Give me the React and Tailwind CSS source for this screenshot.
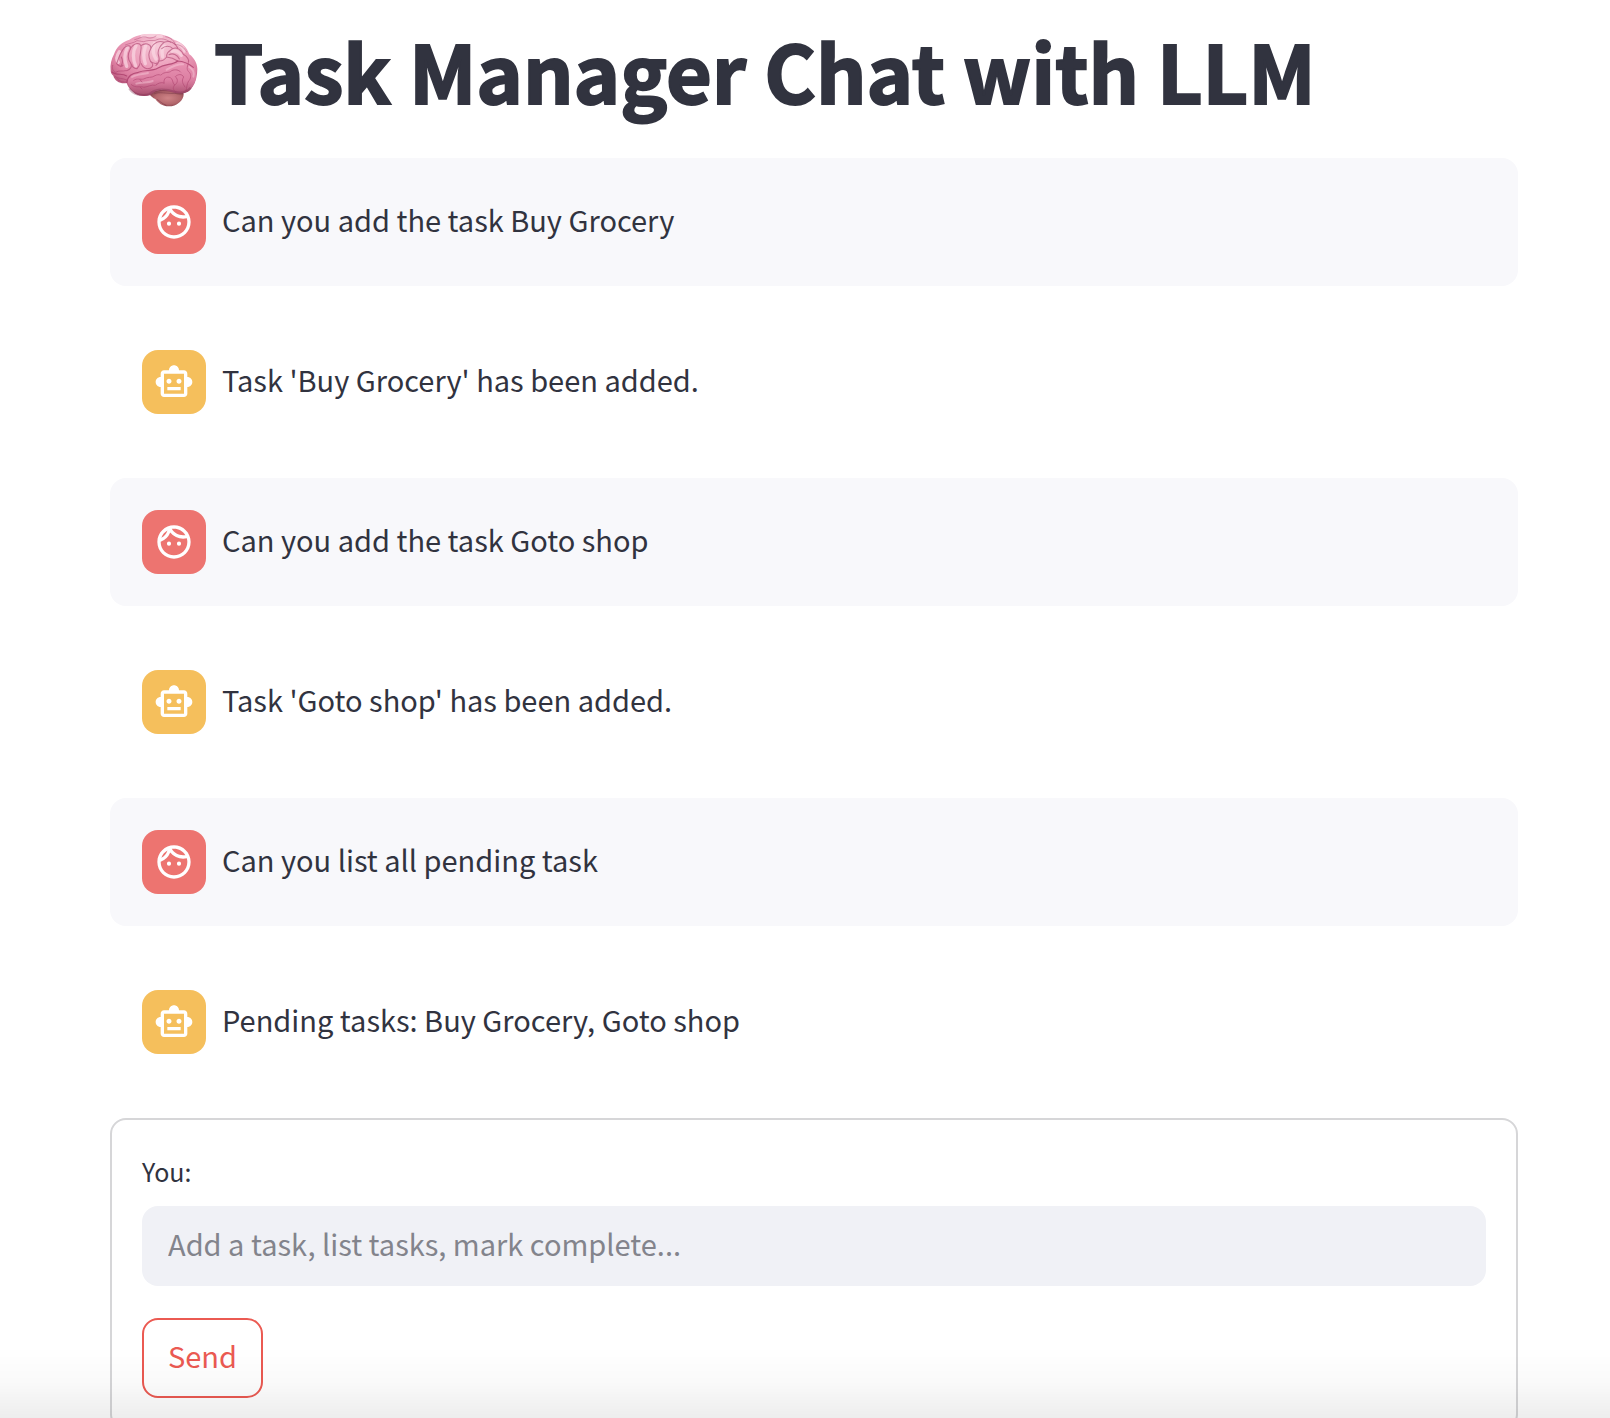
import { MdOutlineFace, MdOutlineSmartToy } from "react-icons/md";

const messages = [
  { role: "user", text: "Can you add the task Buy Grocery" },
  { role: "assistant", text: "Task 'Buy Grocery' has been added." },
  { role: "user", text: "Can you add the task Goto shop" },
  { role: "assistant", text: "Task 'Goto shop' has been added." },
  { role: "user", text: "Can you list all pending task" },
  { role: "assistant", text: "Pending tasks: Buy Grocery, Goto shop" },
];

function Brain() {
  return (
    <svg viewBox="30 40 264 225" className="h-[75px] w-[88px] shrink-0" role="img" aria-label="Brain">
      <defs>
        <radialGradient id="cortex" cx="0.55" cy="0.2" r="0.75">
          <stop offset="0" stopColor="#f6c9d8" />
          <stop offset="0.45" stopColor="#ec9fbb" />
          <stop offset="0.75" stopColor="#dd7fa1" />
          <stop offset="1" stopColor="#b4567a" />
        </radialGradient>
        <linearGradient id="temporal" x1="0" y1="0" x2="0" y2="1">
          <stop offset="0" stopColor="#e994b4" />
          <stop offset="0.55" stopColor="#dc7fa2" />
          <stop offset="1" stopColor="#a54d6c" />
        </linearGradient>
        <radialGradient id="cerebellum" cx="0.55" cy="0.5" r="0.6">
          <stop offset="0" stopColor="#cf8487" />
          <stop offset="0.6" stopColor="#b3676c" />
          <stop offset="1" stopColor="#7d3c47" />
        </radialGradient>
        <filter id="soft">
          <feGaussianBlur stdDeviation="2.2" />
        </filter>
      </defs>
      <path d="M146 218C160 208 240 206 251 222C252 242 230 260 206 260C188 260 174 250 166 238C160 236 150 230 146 218Z" fill="url(#cerebellum)" />
      <path d="M32 152C30 136 34 118 42 104C48 84 66 66 88 60C104 48 130 42 156 43C182 42 206 48 222 60C244 66 262 84 268 104C282 114 292 132 292 148C292 166 288 186 278 200C270 216 256 222 240 221C226 222 212 216 198 212C178 206 164 214 150 226C132 232 108 228 98 214C88 208 82 198 80 190C62 194 44 184 40 168C34 164 32 158 32 152Z" fill="url(#cortex)" />
      <path d="M84 188C84 168 96 160 116 158C134 148 160 152 176 146C196 136 216 130 234 124C252 124 270 132 282 142C294 162 288 192 274 206C262 222 244 222 228 219C208 210 184 208 168 211C152 230 126 232 106 222C92 212 86 204 84 188Z" fill="url(#temporal)" />
      <g fill="none" stroke="#fbd9e4" strokeWidth="10" strokeLinecap="round" opacity="0.7" filter="url(#soft)">
        <path d="M58 96C50 108 48 120 55 128M82 84C74 100 72 120 80 140M108 78C98 94 98 120 107 138M137 78C130 96 130 116 136 132M163 72C157 90 160 106 168 118M193 80C187 84 184 94 188 112M216 94C228 92 238 98 244 107M232 72C242 76 250 85 254 94M126 50C144 46 164 46 184 51" />
        <path d="M96 172C108 164 126 164 144 160M200 150C218 140 232 133 249 134M109 192C124 187 144 190 158 184M268 142C277 148 284 158 280 171" strokeWidth="6" opacity="0.55" />
      </g>
      <g fill="none" stroke="#ab3f6c" strokeLinecap="round" strokeLinejoin="round">
        <g strokeWidth="3.4" opacity="0.8">
          <path d="M36 157C49 168 66 160 80 169M80 189C84 168 95 161 115 158C136 148 154 157 174 145C198 130 216 138 233 124C249 125 264 130 280 143" />
        </g>
        <g strokeWidth="3.2" opacity="0.6">
          <path d="M50 132C56 115 61 98 73 84C84 75 94 77 91 88C82 105 83 119 92 130C97 141 92 150 80 153M64 112C69 123 68 134 61 141M50 132C56 140 66 143 69 137" />
          <path d="M91 88C101 69 118 68 123 78C126 91 117 105 120 123C123 135 116 141 111 147M111 147C102 146 96 141 95 134" />
          <path d="M123 78C135 68 152 73 153 85C145 101 144 110 152 126C164 136 157 147 141 147C130 145 126 139 124 132" />
          <path d="M153 85C161 69 179 61 192 68C178 80 172 92 175 106C180 119 178 129 168 137M152 126C160 131 166 133 172 130" />
          <path d="M192 68C210 61 227 71 233 84M185 87C195 77 211 77 218 87C206 96 199 99 200 112C193 121 184 125 176 124M218 87C231 81 244 91 250 104C263 111 268 122 265 128M207 105C219 99 232 105 238 118M200 112C213 113 223 117 233 124" />
        </g>
        <g strokeWidth="2.6" opacity="0.5">
          <path d="M76 76C90 70 102 70 111 63C121 63 129 69 138 64C149 60 163 66 174 59C188 55 203 61 212 68M104 60C118 57 124 50 138 52C147 57 158 56 168 49M197 51C213 54 223 63 225 75C242 74 253 84 259 96" />
        </g>
        <g strokeWidth="2.8" opacity="0.6">
          <path d="M101 182C112 174 121 181 131 178C144 170 154 176 165 168C171 165 176 164 181 166M120 180L126 187M94 195C108 207 120 198 132 203C145 201 154 194 166 197C175 190 184 187 192 190M120 202L126 208M184 165C194 154 207 162 215 153C226 148 237 151 242 157M192 190C190 176 200 169 211 174C220 178 216 190 224 196C218 203 219 211 226 216M224 196C233 192 236 180 226 171C234 163 246 162 251 172C243 185 249 192 255 202M265 132C260 142 260 152 268 158C274 165 273 178 266 184C260 193 261 204 258 213" />
          <path d="M38 137C36 148 38 154 47 158C57 151 66 156 78 153M44 170C55 179 66 174 80 181M51 174C53 183 65 188 77 187" />
        </g>
      </g>
      <path d="M88 206C98 223 124 231 148 224C164 208 190 206 226 217C248 222 262 216 272 204" fill="none" stroke="#7d2f50" strokeWidth="7" opacity="0.35" filter="url(#soft)" />
      <path d="M163 222C176 216 201 222 225 221C235 224 243 223 250 222M171 239C180 245 186 252 199 257" fill="none" stroke="#763747" strokeWidth="3" opacity="0.55" />
    </svg>
  );
}

function Message({ role, text }) {
  const user = role === "user";
  const Icon = user ? MdOutlineFace : MdOutlineSmartToy;
  return (
    <article className={`flex items-center gap-4 rounded-2xl p-8 ${user ? "bg-[#f8f8fb]" : ""}`}>
      <div className={`flex size-16 shrink-0 items-center justify-center rounded-2xl text-white ${user ? "bg-[#ed7470]" : "bg-[#f5bf5c]"}`}>
        <Icon className="size-10" aria-hidden="true" />
      </div>
      <p className="pb-1.5 text-[29px] leading-[48px]">{text}</p>
    </article>
  );
}

export default function App() {
  return (
    <div className="h-screen overflow-hidden bg-white font-['Noto_Sans_CJK_SC','Source_Sans_Pro',sans-serif] text-[#31333f]">
      <main className="pr-[92px] pl-[110px]">
        <h1 className="flex items-center gap-4 pt-[17px] pb-[35px] text-[79px] leading-[106px] font-bold [-webkit-text-stroke:2px_#31333f]">
          <Brain />
          Task Manager Chat with LLM
        </h1>
        <section className="flex flex-col gap-8" aria-label="Conversation">
          {messages.map((message) => (
            <Message key={message.text} {...message} />
          ))}
          <form className="flex flex-col rounded-2xl border-2 border-[#d6d6d8] px-[30px] pt-[27px] pb-[30px]" onSubmit={(e) => e.preventDefault()}>
            <label htmlFor="prompt" className="pb-[11px] text-[25px] leading-[48px]">You:</label>
            <input
              id="prompt"
              type="text"
              placeholder="Add a task, list tasks, mark complete..."
              className="h-20 w-full rounded-2xl bg-[#f0f1f6] px-[26px] pb-1.5 text-[29px] outline-none placeholder:text-[#83848c]"
            />
            <button type="submit" className="mt-8 h-20 self-start rounded-2xl border-2 border-[#eb5a52] bg-white px-6 pb-1 text-[29px] text-[#eb5a52]">
              Send
            </button>
          </form>
        </section>
      </main>
      <div className="pointer-events-none fixed inset-x-0 bottom-0 h-18 bg-linear-to-t from-black/7 via-black/2 to-transparent" />
    </div>
  );
}
